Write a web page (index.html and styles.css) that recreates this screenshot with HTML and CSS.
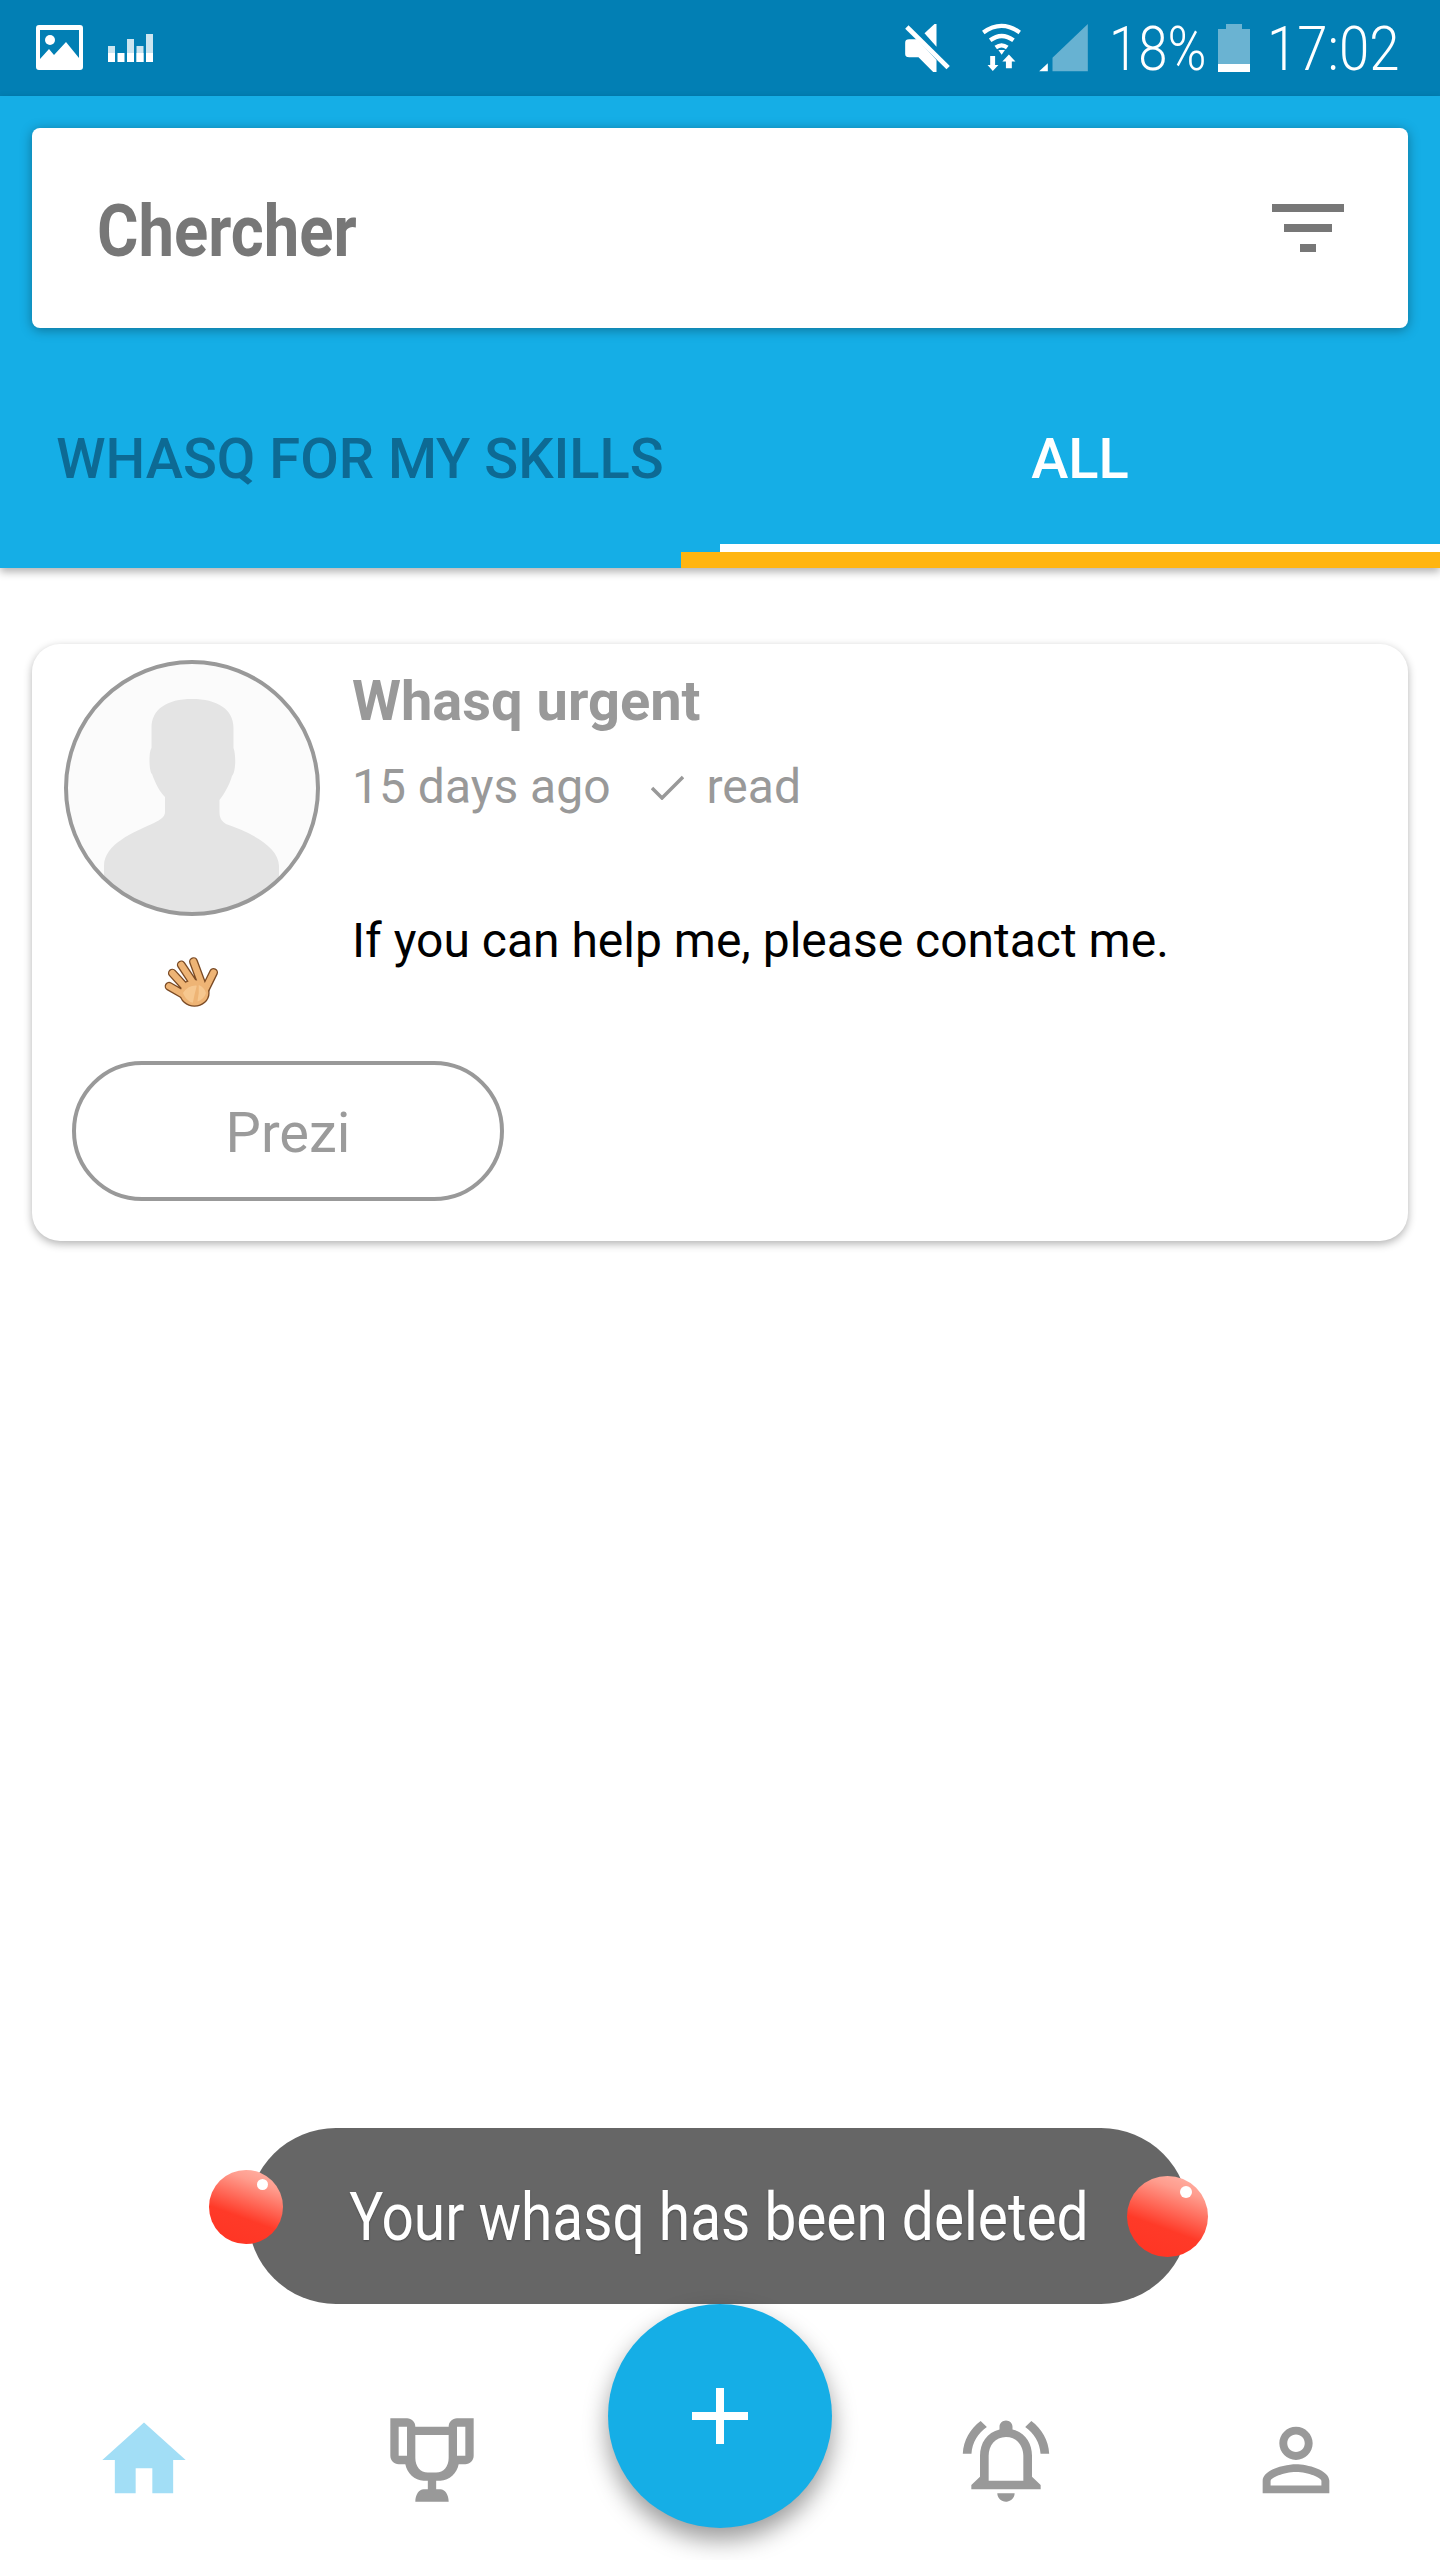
FILE: index.html
```html
<!DOCTYPE html>
<html lang="en">
<head>
  <meta charset="UTF-8">
  <meta name="viewport" content="width=device-width, initial-scale=1.0">
  <title>Whasq</title>
  <link rel="stylesheet" href="styles.css">
</head>
<body>

  <!-- phone status bar -->
  <div class="status-bar">
    <div class="status-left">
      <svg class="ic-picture" viewBox="0 0 47 45">
        <path fill-rule="evenodd" d="M3 0h41a3 3 0 0 1 3 3v39a3 3 0 0 1-3 3H3a3 3 0 0 1-3-3V3a3 3 0 0 1 3-3zM4 5v29l9-10 5 6 12-13 13 16V5z"/>
        <circle cx="14" cy="15" r="5"/>
      </svg>
      <svg class="ic-bars" viewBox="0 0 45 28">
        <rect x="0" y="12" width="7" height="16" class="dim"/>
        <rect x="9.5" y="19" width="7" height="9"/>
        <rect x="19" y="5" width="7" height="23" class="dim"/>
        <rect x="28.5" y="12" width="7" height="16" class="dim"/>
        <rect x="38" y="0" width="7" height="28" class="dim"/>
        <rect x="0" y="19" width="7" height="9"/>
        <rect x="19" y="19" width="7" height="9"/>
        <rect x="28.5" y="19" width="7" height="9"/>
        <rect x="38" y="19" width="7" height="9"/>
      </svg>
    </div>
    <div class="status-right">
      <svg class="ic-mute" viewBox="138 72 134 144">
        <path d="M196 100l30-28h6v68z"/>
        <path d="M150 118h24l58 62v36h-10l-44-44h-28q-12 0-12-10v-34q0-10 12-10z"/>
        <path d="M148 76l124 122-10 10L138 86z"/>
      </svg>
      <svg class="ic-wifi" viewBox="365 70 125 148">
        <path class="line" d="M372 98q55-40 111 0M393 122q35-26 71 0M410 144q18-13 35 0"/>
        <path d="M418 152h20l-10 14zM393 170h15v27h10l-17 19-16-19h8zM450 165l20 22h-11v20h-18v-20h-11z"/>
      </svg>
      <svg class="ic-signal" viewBox="540 72 146 144">
        <path d="M540 214l26-24v24z"/>
        <path class="dim" d="M580 173L686 72v142H580z"/>
      </svg>
      <span class="status-text pct"><span class="squeeze">18%</span></span>
      <div class="battery"><div class="battery-level"></div></div>
      <span class="status-text clock"><span class="squeeze">17:02</span></span>
    </div>
  </div>

  <div class="app-header">
    <div class="search-box">
      <span class="search-label">Chercher</span>
      <div class="filter-icon">
        <span></span>
        <span></span>
        <span></span>
      </div>
    </div>
    <div class="tabs">
      <div class="tab">WHASQ FOR MY SKILLS</div>
      <div class="tab active">ALL</div>
    </div>
  </div>

  <div class="content">
    <div class="card">
      <div class="card-top">
        <div class="card-side">
          <svg class="avatar" viewBox="0 0 256 256">
            <clipPath id="avatarClip"><circle cx="128" cy="128" r="126"/></clipPath>
            <circle cx="128" cy="128" r="126" class="avatar-bg"/>
            <path clip-path="url(#avatarClip)" class="avatar-person" d="M128 39C103 39 87.500 49 87.500 68V88C84.500 92 85 112 88 114C92 125 96 132 101 137V152C101 157 96 160 90 163C70 172 40 184 40 206V256H215V206C215 186 185 172 162 164C157 161 155.500 157 155.500 152V140C160 134 165 126 168 116C172 112 172 94 169.500 88V68C169.500 49 153 39 128 39Z"/>
            <circle cx="128" cy="128" r="126" class="avatar-ring"/>
          </svg>
          <!-- waving hand -->
          <svg class="hand" viewBox="100 75 175 170">
            <g class="hand-outline">
              <path d="M118 170L165 197M128 130L178 185M155 105L198 170M192 95L218 165M253 128L225 185"/>
              <ellipse cx="195" cy="190" rx="46" ry="42"/>
            </g>
            <g class="hand-fill">
              <path d="M118 170L165 197M128 130L178 185M155 105L198 170M192 95L218 165M253 128L225 185"/>
              <ellipse cx="195" cy="190" rx="42" ry="38"/>
            </g>
            <path class="hand-light" d="M160 190q18-24 42-22-8 30-12 52-20-6-30-30zM208 166q16 6 22 24-6 20-26 26 6-26 4-50z"/>
          </svg>
        </div>
        <div class="card-body">
          <div class="card-title">Whasq urgent</div>
          <div class="card-meta">
            <span>15 days ago</span>
            <svg class="check" viewBox="0 0 33 25"><path d="M1 13l10 10L32 2"/></svg>
            <span>read</span>
          </div>
          <p class="card-text">If you can help me, please contact me.</p>
        </div>
      </div>
      <button type="button" class="prezi-btn">Prezi</button>
    </div>
  </div>

  <div class="bottom-nav">
    <div class="nav-item">
      <svg class="nav-icon home" viewBox="0 0 24 24"><path d="M10 20v-6h4v6h5v-8h3L12 3 2 12h3v8z"/></svg>
    </div>
    <div class="nav-item">
      <svg class="nav-icon" viewBox="0 0 24 24"><path fill-rule="evenodd" d="M2 2h4c1.100 0 2 .9 2 2h8c0-1.100.9-2 2-2h4v9c0 1.100-.9 2-2 2h-1.600c-.4 2.200-2.200 3.800-4.400 4h-1v2h1c1.100 0 2 1.300 2 3H8c0-1.700.9-3 2-3h1v-2h-1c-2.200-.2-4-1.800-4.400-4H4c-1.100 0-2-.9-2-2zM4 4v7h2V4zM18 4v7h2V4zM8 6v5.500C8 13.500 9.200 15 11 15h2c1.800 0 3-1.500 3-3.500V6z"/></svg>
    </div>
    <div class="nav-item"></div>
    <div class="nav-item">
      <svg class="nav-icon bell" viewBox="0 0 24 24" preserveAspectRatio="none"><path d="M7.580 4.080L6.150 2.650C3.750 4.480 2.170 7.300 2.030 10.500h2c.15-2.650 1.510-4.970 3.550-6.420zm12.390 6.420h2c-.15-3.200-1.730-6.020-4.120-7.850l-1.420 1.430c2.020 1.450 3.390 3.770 3.540 6.420zM18 11c0-3.070-1.640-5.640-4.500-6.320V4c0-.83-.67-1.500-1.500-1.500s-1.500.67-1.500 1.500v.68C7.630 5.360 6 7.920 6 11v5l-2 2v1h16v-1l-2-2v-5zm-2 6H8v-6c0-2.480 1.510-4.500 4-4.500s4 2.020 4 4.500v6zm-4 5c.14 0 .27-.01.4-.04.65-.14 1.180-.58 1.440-1.180.1-.24.15-.5.15-.78h-4c.01 1.100.9 2 2.010 2z"/></svg>
    </div>
    <div class="nav-item">
      <svg class="nav-icon" viewBox="0 0 24 24"><path d="M12 5.900c1.160 0 2.100.94 2.100 2.100s-.94 2.100-2.100 2.100S9.900 9.160 9.900 8s.94-2.100 2.100-2.100m0 9c2.970 0 6.100 1.460 6.100 2.100v1.100H5.900V17c0-.64 3.130-2.100 6.100-2.100M12 4C9.790 4 8 5.790 8 8s1.790 4 4 4 4-1.790 4-4-1.790-4-4-4zm0 9c-2.670 0-8 1.340-8 4v3h16v-3c0-2.660-5.330-4-8-4z"/></svg>
    </div>
  </div>

  <!-- toast and add button sit over the page -->
  <div class="toast">
    <span class="ball ball-left"></span>
    <span class="toast-text">Your whasq has been deleted</span>
    <span class="ball ball-right"></span>
  </div>
  <button type="button" class="fab" aria-label="Add">
    <svg viewBox="0 0 56 56"><path d="M24 0h8v24h24v8H32v24h-8V32H0v-8h24z"/></svg>
  </button>

</body>
</html>
```

FILE: styles.css
```css
* {
  box-sizing: border-box;
}

body {
  position: relative;
  display: flex;
  flex-direction: column;
  width: 1440px;
  height: 2560px;
  margin: 0;
  background-color: #fff;
  font-family: Roboto, "Liberation Sans", sans-serif;
  overflow: hidden;
}

/* status bar */
.status-bar {
  display: flex;
  justify-content: space-between;
  align-items: flex-start;
  height: 96px;
  padding: 24px 44px 0 36px;
  background-color: #027fb4;
  fill: #fff;
  color: #fff;
}

.status-left,
.status-right {
  display: flex;
  align-items: flex-start;
}

.dim {
  opacity: 0.8;
}

.ic-picture {
  width: 47px;
  height: 45px;
  margin-top: 1px;
}

.ic-bars {
  width: 45px;
  height: 28px;
  margin: 10px 0 0 25px;
}

.ic-mute {
  width: 45px;
  height: 48px;
}

.ic-wifi {
  width: 41px;
  height: 49px;
  margin: -1px 0 0 31px;
}

.ic-wifi .line {
  fill: none;
  stroke: #fff;
  stroke-width: 13;
}

.ic-signal {
  width: 49px;
  height: 48px;
  margin-left: 17px;
}

.ic-signal .dim {
  opacity: 0.4;
}

.status-text {
  display: block;
  height: 48px;
  font-size: 62px;
  font-weight: 300;
  line-height: 50px;
  white-space: nowrap;
}

.squeeze {
  display: inline-block;
  transform: scaleX(0.85);
  transform-origin: left center;
}

.clock .squeeze {
  transform: scaleX(0.88);
}

.pct {
  width: 94px;
  margin-left: 21px;
}

.clock {
  width: 129px;
  margin-left: 17px;
}

.battery {
  position: relative;
  width: 32px;
  height: 43px;
  margin: 5px 0 0 15px;
  background-color: #6ab3d2;
}

.battery::before {
  content: "";
  position: absolute;
  top: -5px;
  left: 8px;
  width: 16px;
  height: 5px;
  background-color: #6ab3d2;
}

.battery-level {
  position: absolute;
  left: 0;
  right: 0;
  bottom: 0;
  height: 8px;
  background-color: #fff;
}

/* blue header with search and tabs */
.app-header {
  position: relative;
  z-index: 1;
  height: 472px;
  padding-top: 32px;
  background-color: #15aee6;
  box-shadow: 0 4px 8px rgba(0, 0, 0, 0.3);
}

.search-box {
  display: flex;
  justify-content: space-between;
  align-items: center;
  height: 200px;
  margin: 0 32px;
  padding: 0 64px 0 65px;
  background-color: #fff;
  border-radius: 8px;
  box-shadow: 0 2px 12px rgba(0, 0, 0, 0.35);
}

.search-label {
  display: inline-block;
  margin-top: 6px;
  color: #777;
  font-size: 72px;
  font-weight: 700;
  transform: scaleX(0.88);
  transform-origin: left center;
}

.filter-icon {
  display: flex;
  flex-direction: column;
  align-items: center;
  gap: 12px;
  width: 72px;
}

.filter-icon span {
  display: block;
  width: 100%;
  height: 8px;
  background-color: #777;
}

.filter-icon span:nth-child(2) {
  width: 48px;
}

.filter-icon span:nth-child(3) {
  width: 16px;
}

.tabs {
  position: relative;
  display: flex;
  height: 240px;
}

/* yellow sliding indicator */
.tabs::after {
  content: "";
  position: absolute;
  left: 681px;
  right: 0;
  bottom: 0;
  height: 16px;
  background-color: #ffb511;
}

.tab {
  position: relative;
  flex: 1;
  padding-top: 101px;
  color: #0d6a94;
  font-size: 56px;
  font-weight: 500;
  line-height: 60px;
  text-align: center;
  white-space: nowrap;
}

.tab.active {
  color: #fff;
}

.tab.active::after {
  content: "";
  position: absolute;
  left: 0;
  right: 0;
  bottom: 16px;
  height: 8px;
  background-color: #fff;
}

/* list */
.content {
  flex: 1;
  padding: 76px 32px 0;
}

.card {
  height: 597px;
  padding: 16px 32px 0;
  background-color: #fff;
  border-radius: 28px;
  box-shadow: 0 3px 8px rgba(0, 0, 0, 0.3);
}

.card-top {
  display: flex;
  gap: 32px;
}

.card-side {
  display: flex;
  flex-direction: column;
  align-items: center;
  width: 256px;
}

.avatar {
  display: block;
  width: 256px;
  height: 256px;
}

.avatar-bg {
  fill: #fbfbfb;
}

.avatar-person {
  fill: #e4e4e4;
}

.avatar-ring {
  fill: none;
  stroke: #999;
  stroke-width: 4;
}

.hand {
  display: block;
  width: 58px;
  height: 56px;
  margin-top: 39px;
}

.hand-outline {
  fill: #7a4a24;
  stroke: #7a4a24;
  stroke-width: 27;
  stroke-linecap: round;
}

.hand-outline ellipse {
  stroke: none;
}

.hand-fill {
  fill: #eeb475;
  stroke: #eeb475;
  stroke-width: 19;
  stroke-linecap: round;
}

.hand-fill ellipse {
  stroke: none;
}

.hand-light {
  fill: #f6c78f;
}

.card-body {
  margin-top: 11px;
}

.card-title {
  color: #999;
  font-size: 56px;
  font-weight: 700;
  line-height: 60px;
}

.card-meta {
  display: flex;
  align-items: center;
  margin-top: 26px;
  color: #999;
  font-size: 48px;
  line-height: 60px;
}

.check {
  width: 33px;
  height: 25px;
  margin: 0 23px 0 40px;
  fill: none;
  stroke: #999;
  stroke-width: 3.500;
}

.card-text {
  margin: 94px 0 0;
  color: #000;
  font-size: 48px;
  line-height: 60px;
  white-space: nowrap;
}

.prezi-btn {
  display: block;
  width: 432px;
  height: 140px;
  margin: 50px 0 0 8px;
  padding-top: 4px;
  background-color: #fff;
  border: 4px solid #999;
  border-radius: 70px;
  color: #9b9b9b;
  font-family: inherit;
  font-size: 56px;
}

/* bottom navigation */
.bottom-nav {
  display: flex;
  padding-bottom: 50px;
}

.nav-item {
  display: flex;
  justify-content: center;
  flex: 1;
}

.nav-icon {
  display: block;
  width: 100px;
  height: 100px;
  fill: #999;
}

.nav-icon.home {
  fill: #a2def6;
}

.nav-icon.bell {
  width: 104px;
  margin-right: 5px;
}

/* toast */
.toast {
  position: absolute;
  top: 2128px;
  left: 248px;
  display: flex;
  justify-content: center;
  align-items: center;
  width: 941px;
  height: 176px;
  background-color: #666;
  border-radius: 88px;
}

.toast-text {
  display: inline-block;
  margin-top: 2px;
  color: #fff;
  font-size: 66px;
  text-shadow: 0 1px 2px rgba(0, 0, 0, 0.3);
  white-space: nowrap;
  transform: scaleX(0.86);
}

.ball {
  position: absolute;
  border-radius: 50%;
  background-image: linear-gradient(200deg, #ffb9ad 0%, #ff9c8d 22%, #ff3a28 62%, #ff3423 100%);
}

.ball::after {
  content: "";
  position: absolute;
  top: 12%;
  left: 65%;
  width: 15%;
  height: 15%;
  background-color: #fff;
  border-radius: 50%;
}

.ball-left {
  top: 42px;
  left: -39px;
  width: 74px;
  height: 74px;
}

.ball-right {
  top: 48px;
  right: -19px;
  width: 81px;
  height: 81px;
}

/* add button */
.fab {
  position: absolute;
  top: 2304px;
  left: 608px;
  display: flex;
  justify-content: center;
  align-items: center;
  width: 224px;
  height: 224px;
  padding: 0;
  background-color: #15aee6;
  border: none;
  border-radius: 50%;
  box-shadow: 0 12px 24px rgba(0, 0, 0, 0.4);
}

.fab svg {
  display: block;
  width: 56px;
  height: 56px;
  fill: #fff;
}
```
